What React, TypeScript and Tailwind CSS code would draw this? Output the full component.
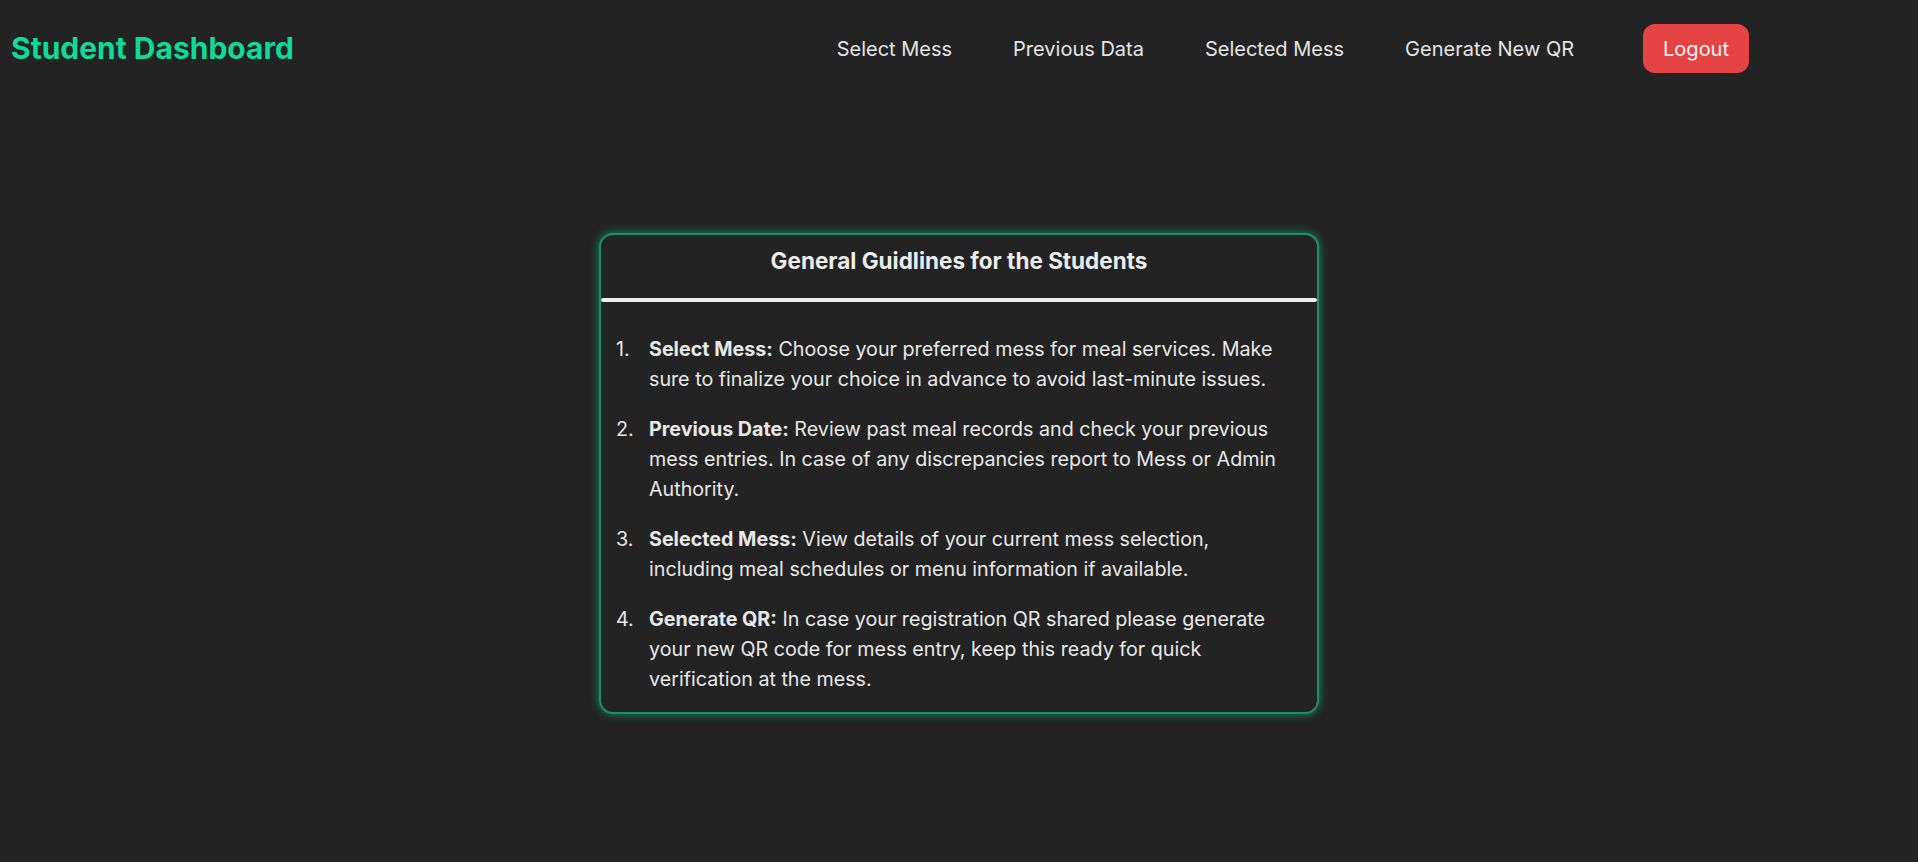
import React from "react";

const items: { title: string; text: string }[] = [
  {
    title: "Select Mess:",
    text: "Choose your preferred mess for meal services. Make sure to finalize your choice in advance to avoid last-minute issues.",
  },
  {
    title: "Previous Date:",
    text: "Review past meal records and check your previous mess entries. In case of any discrepancies report to Mess or Admin Authority.",
  },
  {
    title: "Selected Mess:",
    text: "View details of your current mess selection, including meal schedules or menu information if available.",
  },
  {
    title: "Generate QR:",
    text: "In case your registration QR shared please generate your new QR code for mess entry, keep this ready for quick verification at the mess.",
  },
];

export default function App() {
  return (
    <div className="min-h-screen bg-[#232323] font-['Inter',sans-serif] text-[#e8e8e8]">
      <header className="flex h-[96px] items-center justify-between pl-[11px] pr-[169px]">
        <h1 className="text-[30px] font-bold leading-[36px] text-[#10d99a]">Student Dashboard</h1>
        <nav className="flex items-center pt-[1px]">
          <div className="flex items-center gap-[61px] text-[20px] leading-[28px] text-[#e5e5e5]">
            <a className="cursor-pointer">Select Mess</a>
            <a className="cursor-pointer">Previous Data</a>
            <a className="cursor-pointer">Selected Mess</a>
            <a className="cursor-pointer">Generate New QR</a>
          </div>
          <button className="ml-[69px] flex h-[49px] items-center rounded-[12px] bg-[#e34343] px-[20px] text-[20px] leading-[28px] text-[#fff4f4]">
            Logout
          </button>
        </nav>
      </header>
      <main className="flex justify-center pt-[137px]">
        <div className="w-[720px] rounded-[14px] border-2 border-[#1a9166] bg-[#232323] shadow-[0_0_10px_rgba(16,185,129,0.7)]">
          <div className="flex h-[63px] items-center justify-center pb-[12px]">
            <h2 className="text-[22.5px] font-bold leading-[30px] text-[#ececec]">General Guidlines for the Students</h2>
          </div>
          <div className="h-[4px] rounded-full bg-[#eeeeee]" />
          <ol className="flex flex-col gap-[20px] pb-[18px] pl-[15px] pr-[30px] pt-[32px] text-[19.7px] leading-[30px] text-[#e8e8e8]">
            {items.map((it, i) => (
              <li key={i} className="flex">
                <span className="w-[33px] shrink-0">{i + 1}.</span>
                <p>
                  <strong className="font-bold">{it.title}</strong> {it.text}
                </p>
              </li>
            ))}
          </ol>
        </div>
      </main>
    </div>
  );
}
